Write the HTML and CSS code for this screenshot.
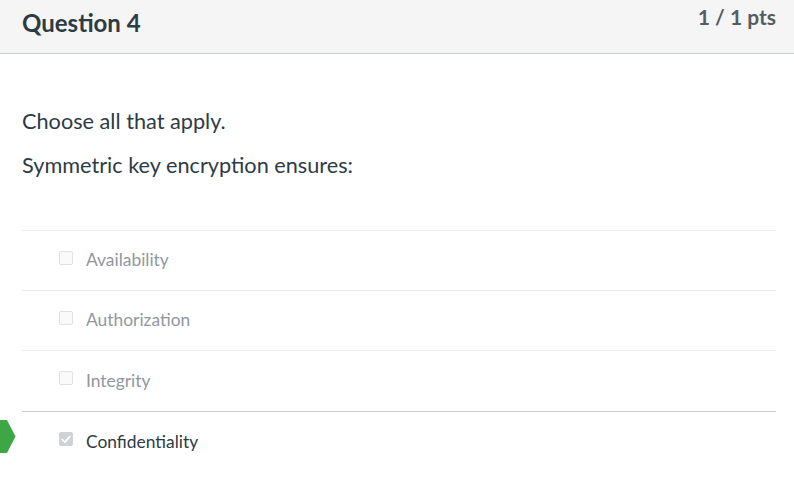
FILE: index.html
```html
<!DOCTYPE html>
<html>
<head>
<meta charset="utf-8">
<link rel="stylesheet" href="styles.css">
</head>
<body>
<div class="question">
  <div class="header">
    <h2 class="title">Question 4</h2>
    <div class="pts">1 / 1 pts</div>
  </div>
  <div class="content">
    <div class="text">
      <p>Choose all that apply.</p>
      <p>Symmetric key encryption ensures:</p>
    </div>
    <div class="answers">
      <div class="answer">
        <span class="box"></span>
        <span class="label">Availability</span>
      </div>
      <div class="answer">
        <span class="box"></span>
        <span class="label">Authorization</span>
      </div>
      <div class="answer before-selected">
        <span class="box"></span>
        <span class="label">Integrity</span>
      </div>
      <div class="answer selected">
        <svg class="arrow" width="16" height="33" viewBox="0 0 16 33"><polygon points="0,0 7,0 15.5,16.5 7,33 0,33" fill="#3ea745"/></svg>
        <span class="box checked"><svg width="10" height="9" viewBox="0 0 10 9"><path d="M1.2 4.6 L3.9 7.2 L8.8 1.6" fill="none" stroke="#fff" stroke-width="1.8" stroke-linecap="round" stroke-linejoin="round"/></svg></span>
        <span class="label">Confidentiality</span>
      </div>
    </div>
  </div>
</div>
</body>
</html>
```

FILE: styles.css
```css
html, body {
  margin: 0;
  padding: 0;
  background: #ffffff;
}
body {
  font-family: Lato, "Open Sans", sans-serif;
  color: #2d3b45;
}
.header {
  height: 53px;
  background: #f5f5f5;
  border-bottom: 1px solid #c7cdd1;
  display: flex;
  justify-content: space-between;
  align-items: flex-start;
  padding: 0 18px 0 22px;
}
.title {
  margin: 9px 0 0 0;
  font-size: 24px;
  line-height: 1.2;
  font-weight: 700;
  color: #2d3b45;
}
.pts {
  margin-top: 4px;
  font-size: 21px;
  line-height: 1.2;
  font-weight: 700;
  color: #555d63;
}
.content {
  padding: 0 18px 0 22px;
}
.text {
  padding-top: 52px;
  padding-bottom: 50px;
}
.text p {
  margin: 0;
  font-size: 21.7px;
  line-height: 30px;
}
.text p + p {
  margin-top: 14px;
}
.answer {
  position: relative;
  height: 59px;
  border-top: 1px solid #e8eaec;
  display: flex;
  align-items: center;
  padding-left: 37px;
}
.answer.before-selected {
  height: 60px;
}
.answer.selected {
  border-top-color: #c9cdd0;
  height: 60px;
}
.box {
  width: 12px;
  height: 12px;
  border: 1px solid #dfe2e4;
  border-radius: 2px;
  background: #fafafa;
  margin-right: 13px;
  margin-bottom: 6px;
  display: flex;
  align-items: center;
  justify-content: center;
}
.box.checked {
  background: #d0d3d5;
  border-color: #d0d3d5;
}
.label {
  font-size: 17.4px;
  line-height: 1.2;
  color: #8f989e;
}
.selected .label {
  color: #2d3b45;
}
.arrow {
  position: absolute;
  left: -22px;
  top: 8px;
}
```
